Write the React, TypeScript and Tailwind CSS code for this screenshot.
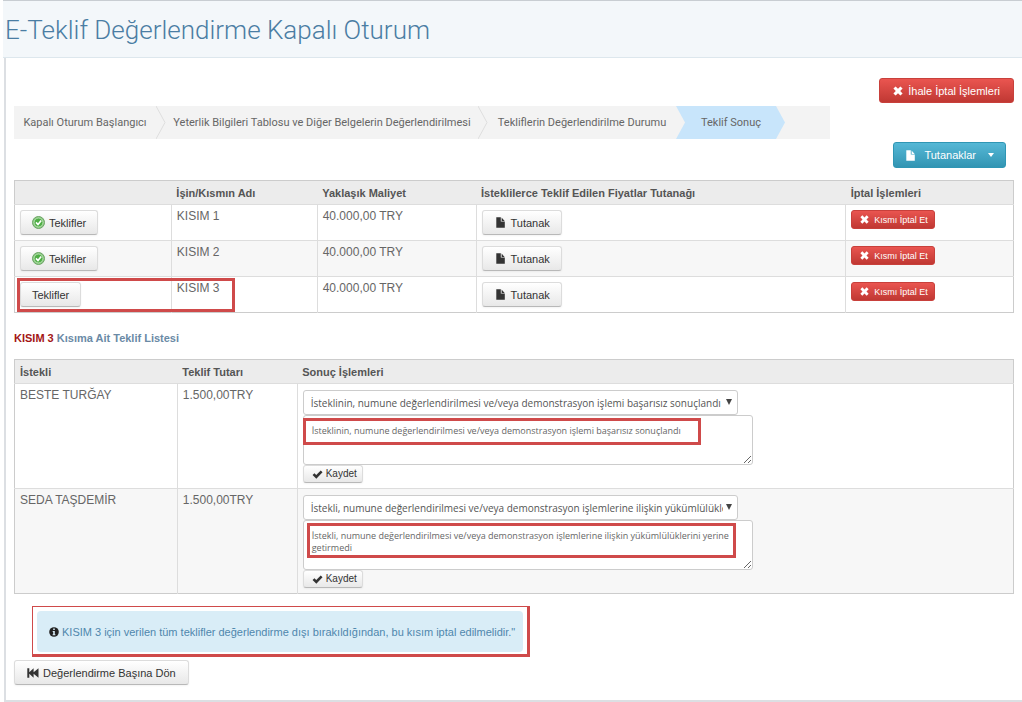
import type { ReactNode } from "react";

type IconProps = { className?: string };

const CrossIcon: React.FC<IconProps> = ({ className }) => (
  <svg viewBox="0 0 10 10" className={className} fill="currentColor" aria-hidden="true">
    <path d="M2.6 0.4 5 2.8 7.4 0.4 9.6 2.6 7.2 5 9.6 7.4 7.4 9.6 5 7.2 2.6 9.6 0.4 7.4 2.8 5 0.4 2.6Z" />
  </svg>
);

const FileIcon: React.FC<IconProps> = ({ className }) => (
  <svg viewBox="0 0 9 11" className={className} fill="currentColor" aria-hidden="true">
    <path d="M0.3 0.3H4.8V4.6H8.8V10.8H0.3Z" />
    <path d="M5.6 0.6 8.6 3.9H5.6Z" />
  </svg>
);

const TickIcon: React.FC<IconProps> = ({ className }) => (
  <svg viewBox="0 0 12 10" className={className} fill="currentColor" aria-hidden="true">
    <path d="M0.5 5.6 2.6 3.6 4.6 5.6 9.6 0.6 11.6 2.4 4.7 9.6Z" />
  </svg>
);

const InfoIcon: React.FC<IconProps> = ({ className }) => (
  <svg viewBox="0 0 10 10" className={className} aria-hidden="true">
    <circle cx="5" cy="5" r="4.8" fill="#222" />
    <path d="M4.2 1.6H5.8V3H4.2ZM3.7 3.9H5.8V7.2H6.4V8.2H3.6V7.2H4.2V4.9H3.7Z" fill="#d9edf7" />
  </svg>
);

const RewindIcon: React.FC<IconProps> = ({ className }) => (
  <svg viewBox="0 0 12 10" className={className} fill="currentColor" aria-hidden="true">
    <path d="M0.3 0.3H2.3V4.2L6.6 0.3V4.2L11.5 0.3V9.7L6.6 5.8V9.7L2.3 5.8V9.7H0.3Z" />
  </svg>
);

const ApprovedIcon: React.FC<IconProps> = ({ className }) => (
  <svg viewBox="0 0 13 13" className={className} aria-hidden="true">
    <circle cx="6.5" cy="6.5" r="6" fill="#8fc886" stroke="#6aa463" />
    <circle cx="6.5" cy="6.5" r="4.4" fill="#4fae45" stroke="#b9e3b2" strokeWidth="0.8" />
    <path d="M4 6.4 6 8.5 9.2 4.6" fill="none" stroke="#fff" strokeWidth="1.6" />
  </svg>
);

const btn = "inline-flex items-center rounded-[3px] border cursor-pointer whitespace-nowrap";
const btnGray = `${btn} border-[#dcdcdc] border-b-[#b8b8b8] bg-linear-to-b from-white to-[#e8e8e8] text-[#333] shadow-xs`;
const btnRed = `${btn} border-[#c8403b] bg-linear-to-b from-[#ea5550] to-[#c03833] text-white`;

/* Red frame drawn over the content that needs attention */
const Frame: React.FC<{ className: string }> = ({ className }) => (
  <span className={`pointer-events-none absolute border-3 border-[#cf4a4a] ${className}`} />
);

const StepArrow: React.FC<{ left: string; right: string; line?: boolean }> = ({ left, right, line }) => (
  <svg viewBox="0 0 10 33" className="h-full w-[10px] shrink-0" aria-hidden="true">
    <path d="M0 0H10V33H0Z" fill={right} />
    <path d="M0 0 9 16.5 0 33Z" fill={left} />
    {line && <path d="M0 0 9 16.5 0 33" fill="none" stroke="#dedede" />}
  </svg>
);

const Th: React.FC<{ children?: ReactNode }> = ({ children }) => (
  <th className="h-6 px-[5px] text-left text-[11px] font-bold text-[#555]">{children}</th>
);

const parts = [
  { name: "KISIM 1", cost: "40.000,00 TRY", approved: true },
  { name: "KISIM 2", cost: "40.000,00 TRY", approved: true },
  { name: "KISIM 3", cost: "40.000,00 TRY", approved: false },
];

const failed = "İsteklinin, numune değerlendirilmesi ve/veya demonstrasyon işlemi başarısız sonuçlandı";
const unfulfilled =
  "İstekli, numune değerlendirilmesi ve/veya demonstrasyon işlemlerine ilişkin yükümlülüklerini yerine getirmedi";

const bids = [
  { id: "beste", bidder: "BESTE TURĞAY", amount: "1.500,00TRY", result: failed, frame: "top-[34px] left-[5px] h-[27px] w-[398px]" },
  { id: "seda", bidder: "SEDA TAŞDEMİR", amount: "1.500,00TRY", result: unfulfilled, frame: "top-[34px] left-[9px] h-[35px] w-[429px]" },
];

const Steps: React.FC = () => (
  <ol className="my-[3px] flex h-[33px] max-w-[816px] items-center bg-[#f3f3f3] text-center font-[Roboto,sans-serif] text-[11px] whitespace-nowrap text-[#666]">
    <li className="w-[142px]">Kapalı Oturum Başlangıcı</li>
    <StepArrow left="#f3f3f3" right="#f3f3f3" line />
    <li className="w-[312px]">Yeterlik Bilgileri Tablosu ve Diğer Belgelerin Değerlendirilmesi</li>
    <StepArrow left="#f3f3f3" right="#f3f3f3" line />
    <li className="w-[188px]">Tekliflerin Değerlendirilme Durumu</li>
    <StepArrow left="#f3f3f3" right="#c8e5fb" />
    <li aria-current="step" className="flex h-full w-[90px] items-center justify-center bg-[#c8e5fb]">Teklif Sonuç</li>
    <StepArrow left="#c8e5fb" right="#f3f3f3" />
  </ol>
);

const PartsTable: React.FC = () => (
  <table className="w-full table-fixed border-collapse border border-[#ccc]">
    <colgroup>
      <col className="w-[15.7%]" />
      <col className="w-[14.6%]" />
      <col className="w-[15.9%]" />
      <col className="w-[37%]" />
      <col />
    </colgroup>
    <thead className="bg-[#ececec]">
      <tr>
        <Th />
        <Th>İşin/Kısmın Adı</Th>
        <Th>Yaklaşık Maliyet</Th>
        <Th>İsteklilerce Teklif Edilen Fiyatlar Tutanağı</Th>
        <Th>İptal İşlemleri</Th>
      </tr>
    </thead>
    <tbody>
      {parts.map((part) => (
        <tr key={part.name} className="border-t border-[#ddd] align-top even:bg-[#f7f7f7]">
          <td className="relative px-[5px] pt-[5px] pb-[5px]">
            <button type="button" className={`${btnGray} h-[25px] px-[11px] text-[11px]`}>
              {part.approved && <ApprovedIcon className="mr-1 size-[13px]" />}
              Teklifler
            </button>
            {!part.approved && <Frame className="top-px left-[2px] h-[34px] w-[218px]" />}
          </td>
          <td className="border-l border-[#ddd] px-[5px] pt-[3px]">{part.name}</td>
          <td className="border-l border-[#ddd] px-[5px] pt-[3px]">{part.cost}</td>
          <td className="border-l border-[#ddd] px-[5px] pt-[5px] pb-[5px]">
            <button type="button" className={`${btnGray} h-[25px] px-[11px] text-[11px]`}>
              <FileIcon className="mr-[6px] ml-[2px] h-[11px] w-[9px]" />
              Tutanak
            </button>
          </td>
          <td className="border-l border-[#ddd] px-[5px] pt-[5px]">
            <button type="button" className={`${btnRed} h-[19px] px-[6px] text-[9px]`}>
              <CrossIcon className="mr-[5px] ml-[2px] size-[9px]" />
              Kısmı İptal Et
            </button>
          </td>
        </tr>
      ))}
    </tbody>
  </table>
);

const BidsTable: React.FC = () => (
  <table className="w-full table-fixed border-collapse border border-[#ccc]">
    <colgroup>
      <col className="w-[16.3%]" />
      <col className="w-[12%]" />
      <col />
    </colgroup>
    <thead className="bg-[#ececec]">
      <tr>
        <Th>İstekli</Th>
        <Th>Teklif Tutarı</Th>
        <Th>Sonuç İşlemleri</Th>
      </tr>
    </thead>
    <tbody>
      {bids.map((bid) => (
        <tr key={bid.id} className="border-t border-[#ddd] align-top even:bg-[#f7f7f7]">
          <td className="px-[5px] pt-[3px]">{bid.bidder}</td>
          <td className="border-l border-[#ddd] px-[5px] pt-[3px]">{bid.amount}</td>
          <td className="relative border-l border-[#ddd] px-[5px] pt-[6px] pb-[5px] font-['Open_Sans',sans-serif]">
            <div className="relative max-w-[435px]">
              <select
                aria-label={`${bid.bidder} sonuç`}
                className="block h-[25px] w-full appearance-none rounded-[3px] border border-[#ccc] bg-white pr-[14px] pl-[7px] text-[10px] text-[#555]"
              >
                <option>{bid.result}</option>
              </select>
              <svg viewBox="0 0 6 6" className="pointer-events-none absolute top-[9px] right-[6px] size-[6px]" aria-hidden="true">
                <path d="M0 0H6L3 6Z" fill="#444" />
              </svg>
            </div>
            <textarea
              aria-label={`${bid.bidder} açıklama`}
              defaultValue={bid.result}
              className="block h-[50px] w-full max-w-[450px] rounded-[3px] border border-[#ccc] bg-white px-2 pt-[9px] text-[9px] leading-3 text-[#666]"
            />
            <button type="button" className={`${btnGray} h-[18px] pr-[5px] pl-2 font-['Liberation_Sans',Arial,sans-serif] text-[10px]`}>
              <TickIcon className="mr-[3px] h-[9px] w-[11px]" />
              Kaydet
            </button>
            <Frame className={bid.frame} />
          </td>
        </tr>
      ))}
    </tbody>
  </table>
);

const App: React.FC = () => {
  return (
    <div className="min-h-screen bg-white pl-[3px] font-['Liberation_Sans',Arial,sans-serif] text-[12px] leading-4 text-[#666]">
      <header className="flex h-[58px] items-center border-t border-b border-t-[#c8cdd2] border-b-[#dde7ed] bg-[#f3f7fa] pt-[2px] pl-[2px]">
        <h1 className="font-[Roboto,sans-serif] text-[26px] font-light text-[#4a7da3]">
          E-Teklif Değerlendirme Kapalı Oturum
        </h1>
      </header>

      <main className="ml-px border-b-2 border-l-2 border-[#dcdfe3] pt-5 pr-2 pb-[15px] pl-2">
        <div className="flex justify-end">
          <button type="button" className={`${btnRed} h-[25px] px-[13px] text-[11px]`}>
            <CrossIcon className="mr-[5px] size-[10px]" />
            İhale İptal İşlemleri
          </button>
        </div>

        <Steps />

        <div className="mb-3 flex justify-end pr-2">
          <button
            type="button"
            className={`${btn} h-[26px] border-[#2f96b4] bg-linear-to-b from-[#55b8d6] to-[#3295b3] px-[11px] text-[11px] text-white`}
          >
            <FileIcon className="mr-[9px] ml-px h-[11px] w-[9px]" />
            Tutanaklar
            <svg viewBox="0 0 6 4" className="ml-3 h-1 w-[6px]" aria-hidden="true">
              <path d="M0 0H6L3 4Z" fill="#fff" />
            </svg>
          </button>
        </div>

        <PartsTable />

        <h2 className="mt-[17px] mb-[13px] text-[11px] font-bold text-[#6a8aa6]">
          <span className="text-[#a31515]">KISIM 3</span> Kısıma Ait Teklif Listesi
        </h2>

        <BidsTable />

        <div className="mt-3 ml-[18px] w-fit border-t border-r-3 border-b-3 border-l border-[#cf4a4a] px-1 pt-1 pb-[2px]">
          <p role="status" className="flex h-[41px] items-center rounded-sm bg-[#d9edf7] pr-2 pl-3 text-[11px] text-[#4f87ad]">
            <InfoIcon className="mr-[3px] size-[10px]" />
            KISIM 3 için verilen tüm teklifler değerlendirme dışı bırakıldığından, bu kısım iptal edilmelidir."
          </p>
        </div>

        <button type="button" className={`${btnGray} mt-[3px] flex h-[25px] px-3 text-[11px]`}>
          <RewindIcon className="mr-1 h-[10px] w-3" />
          Değerlendirme Başına Dön
        </button>
      </main>
    </div>
  );
};

export default App;
